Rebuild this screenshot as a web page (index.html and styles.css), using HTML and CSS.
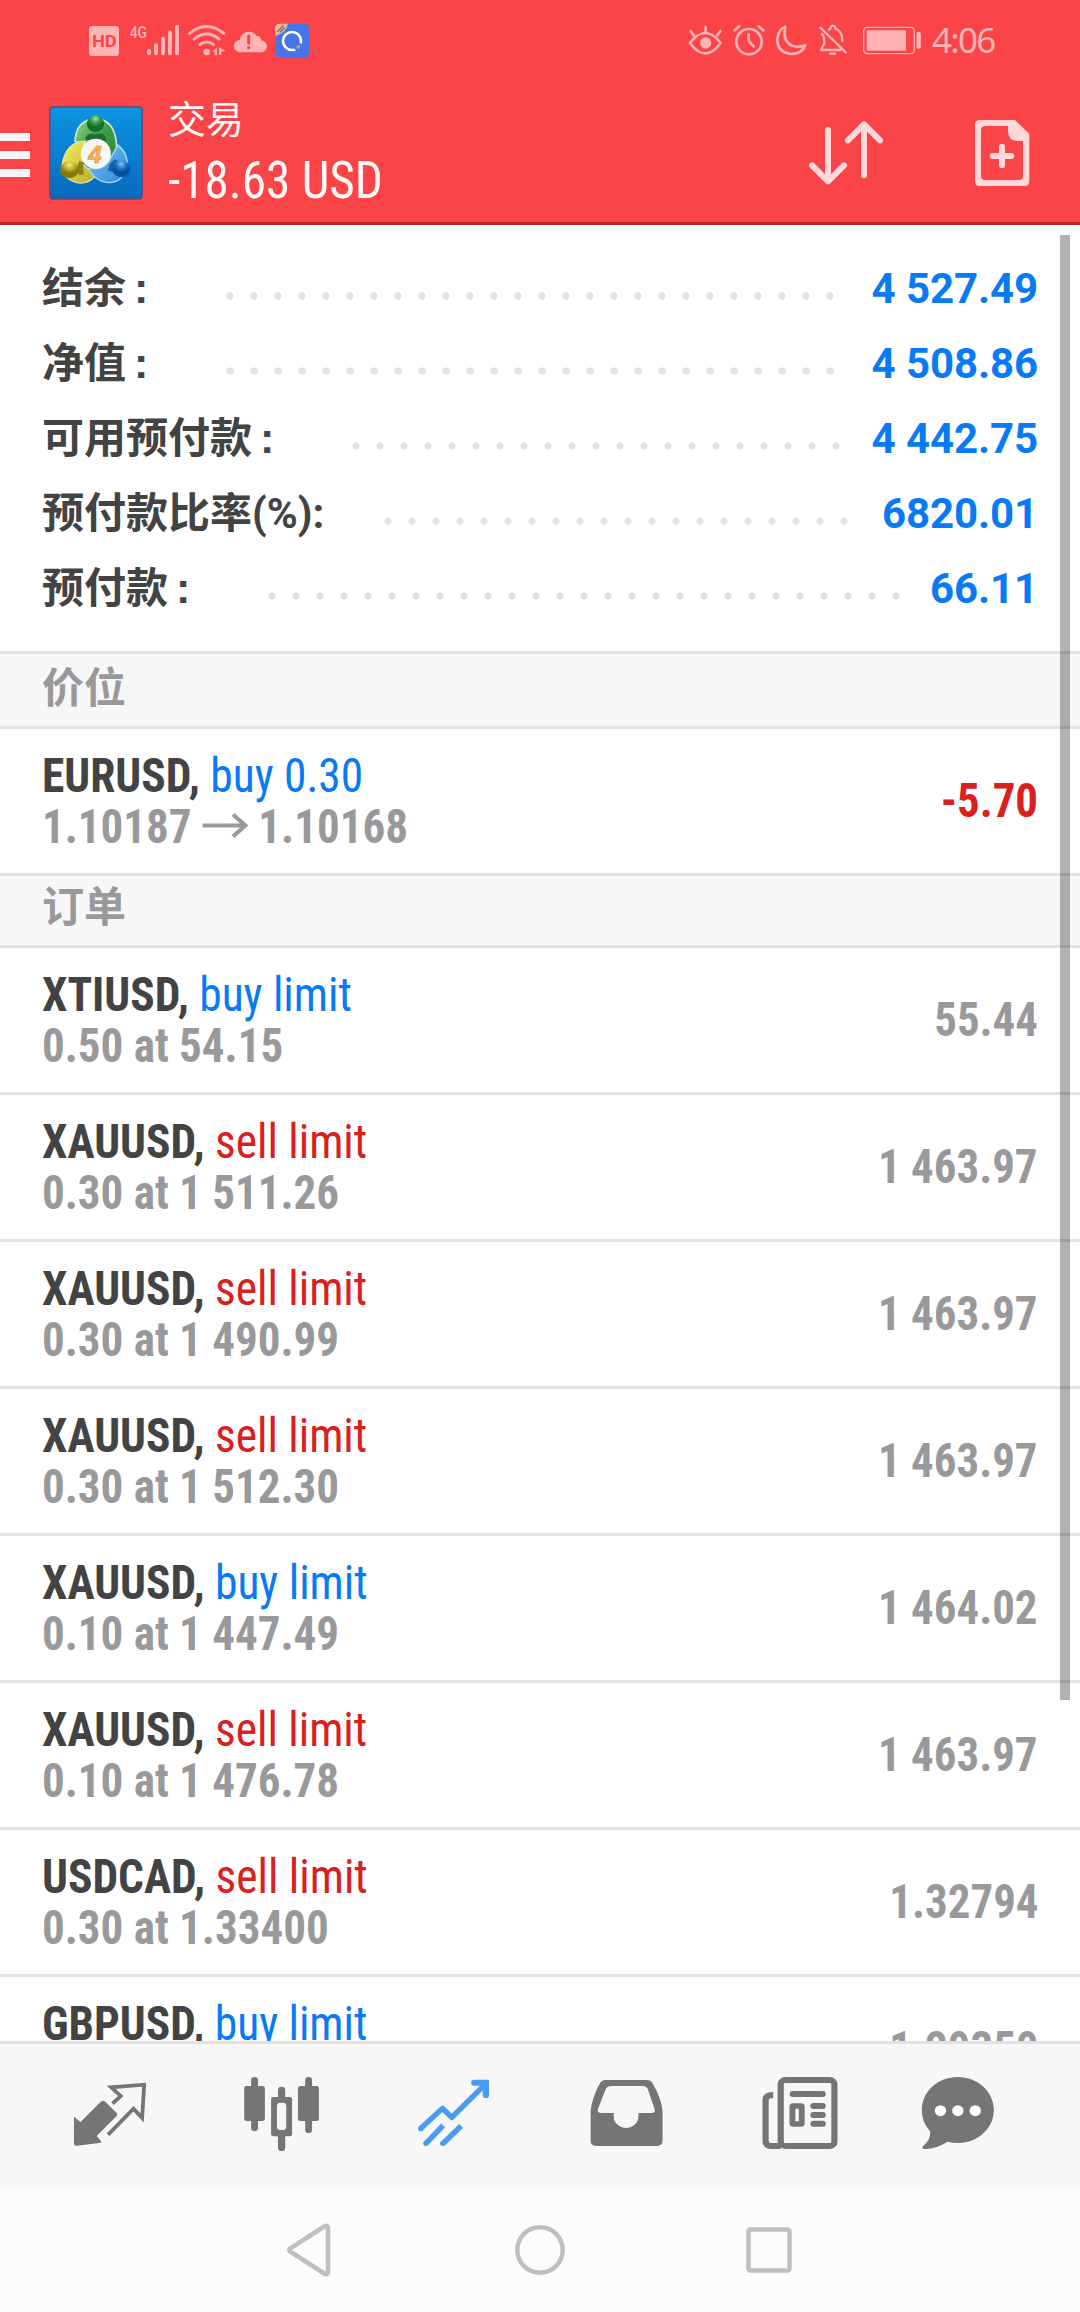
FILE: index.html
```html
<!DOCTYPE html>
<html lang="zh-CN">
<head>
<meta charset="utf-8">
<title>交易</title>
<link rel="stylesheet" href="styles.css">
</head>
<body>
<div class="screen">
  <header class="top">
    <div class="status">
      <svg class="status-left" width="230" height="40" viewBox="240 60 690 120" fill="#ffb3b5">
        <path fill-rule="evenodd" d="M277 78h70q10 0 10 10v70q0 10-10 10h-70q-10 0-10-10V88q0-10 10-10z"/>
        <text x="276" y="142" class="hd" textLength="74" lengthAdjust="spacingAndGlyphs">HD</text>
        <text x="389" y="115" class="net" textLength="52" lengthAdjust="spacingAndGlyphs">4G</text>
        <g stroke="#ffb3b5" stroke-width="12" stroke-linecap="round">
          <path d="M447 153v7M468 136v24M489 116v44M510 97v63M531 80v80"/>
        </g>
        <g stroke="#ffb3b5" stroke-width="9" fill="none" stroke-linecap="round">
          <path d="M569 100q51-41 102 0M583 117q37-30 74 0M600 134q20-16 41 0"/>
        </g>
        <circle cx="620" cy="156" r="10"/>
        <path d="M638 154l13-12v24h-7v-9zM657 142l20 11-13 2v9h-7z"/>
        <path d="M721 157a19 19 0 0 1-1-38 27 27 0 0 1 49-12q13 0 15 14a18 18 0 0 1-3 36z"/>
        <path d="M746 108v21" stroke="#fb4447" stroke-width="9" stroke-linecap="round"/><circle cx="746" cy="143" r="5" fill="#fb4447"/>
        <rect x="825" y="71" width="103" height="103" rx="16" fill="#4575e9"/>
        <path d="M825 108V87q0-16 16-16h23q-5 28-39 37z" fill="#e7b98e"/>
        <path d="M832 95l18-18M840 97l14-14" stroke="#806b73" stroke-width="4"/>
        <circle cx="876" cy="123" r="27" fill="none" stroke="#fff" stroke-width="8"/>
        <circle cx="895" cy="141" r="13" fill="#4575e9"/><circle cx="895" cy="141" r="6" fill="#c2a055"/>
      </svg>
      <div class="status-right">
        <svg width="240" height="40" viewBox="75 60 720 120" fill="none" stroke="#ffb3b5" stroke-width="8" stroke-linecap="round" stroke-linejoin="round">
          <path d="M90 129q46-60 92 0-46 63-92 0zM137 81v14M92 93l9 13M181 93l-9 13"/>
          <circle cx="137" cy="129" r="17" fill="#ffb3b5" stroke="none"/>
          <circle cx="267" cy="125" r="38"/><path d="M266 103v20l15 16M224 91l14-12M310 91l-14-12"/>
          <path d="M376 80q-9 43 20 57 17 8 40-1-10 26-42 26-42-4-42-44 2-30 24-38z"/>
          <path d="M481 83l76 74M486 102q8 8 7 28l-10 20h58M507 89l5-4q-1-8 6-8 7 0 8 8 22 9 21 38M511 161h14" stroke-width="7"/>
          <rect x="611" y="82" width="152" height="79" rx="11" stroke-width="4"/>
          <rect x="620" y="91" width="118" height="61" rx="3" fill="#ffb3b5" stroke="none"/>
          <path d="M776 102v38" stroke-width="13"/>
        </svg>
        <span class="clock">4:06</span>
      </div>
    </div>
    <div class="bar">
      <div class="burger"><i></i><i></i><i></i></div>
      <svg class="logo" width="94" height="94" viewBox="148 319 281 281">
        <defs>
          <linearGradient id="sky" x1="0" y1="0" x2="0" y2="1"><stop offset="0" stop-color="#0d95e2"/><stop offset="1" stop-color="#0569bd"/></linearGradient>
          <linearGradient id="green" x1="0" y1="0" x2="1" y2="1"><stop offset="0" stop-color="#8fd884"/><stop offset=".5" stop-color="#3d9a4a"/><stop offset="1" stop-color="#2b8a3c"/></linearGradient>
          <linearGradient id="yellow" x1="0" y1="0" x2="1" y2="1"><stop offset="0" stop-color="#f8ef5c"/><stop offset="1" stop-color="#b9ac2c"/></linearGradient>
          <linearGradient id="blue" x1="0" y1="0" x2="1" y2="1"><stop offset="0" stop-color="#7cc4f4"/><stop offset="1" stop-color="#2c88d6"/></linearGradient>
          <radialGradient id="gball" cx=".5" cy=".2"><stop offset="0" stop-color="#a9e3a2"/><stop offset=".5" stop-color="#3ba04c"/><stop offset="1" stop-color="#107029"/></radialGradient>
          <radialGradient id="yball" cx=".5" cy=".2"><stop offset="0" stop-color="#f3eb8c"/><stop offset=".5" stop-color="#c9b92a"/><stop offset="1" stop-color="#83790e"/></radialGradient>
          <radialGradient id="bball" cx=".5" cy=".2"><stop offset="0" stop-color="#8accf8"/><stop offset=".5" stop-color="#1f7fcb"/><stop offset="1" stop-color="#07509b"/></radialGradient>
        </defs>
        <rect x="150.500" y="322" width="276" height="275" rx="9" fill="url(#sky)" stroke="#5c4a78" stroke-width="4"/>
        <path d="M226 425q2-48 34-62 27-14 54 0 38 20 36 92-8 42-32 48l-48-68z" fill="url(#green)" stroke="#cdeac4" stroke-width="5"/>
        <path d="M256 420q2-14 12-18h38q12 4 14 24z" fill="#1d6f33"/>
        <path d="M256 424q-52 2-66 58-10 38 18 56 36 22 66 2 8-5 12-14l-40-36z" fill="url(#yellow)" stroke="#e9e6a0" stroke-width="4"/>
        <path d="M240 482q-14 20-2 44l14-2-2-34z" fill="#8b8118"/>
        <path d="M354 436q34 28 26 68-12 42-50 44-42 0-64-42l60-20z" fill="url(#blue)" stroke="#a9d9f8" stroke-width="4"/>
        <path d="M330 492l14-14 10 4-16 34-14-4z" fill="#1762a8"/>
        <ellipse cx="287" cy="372" rx="26" ry="25" fill="url(#gball)"/>
        <ellipse cx="209" cy="510" rx="28" ry="25" fill="url(#yball)"/>
        <ellipse cx="364" cy="507" rx="27" ry="25" fill="url(#bball)"/>
        <circle cx="288" cy="462" r="45" fill="#f7f7f4"/>
        <text x="265" y="488" class="four" textLength="40" lengthAdjust="spacingAndGlyphs">4</text>
      </svg>
      <div class="titles"><div class="title">交易</div><div class="profit">-18.63 USD</div></div>
      <svg class="act" width="74" height="64" viewBox="447 362 222 192" fill="none" stroke="#ffd9da" stroke-width="18" stroke-linecap="round" stroke-linejoin="round">
        <path d="M504 389v154M456 495l48 48 48-48M612 525V372M564 420l48-48 48 48"/>
      </svg>
      <svg class="act doc" width="56" height="68" viewBox="942 357 168 204" fill="#ffd9da">
        <path fill-rule="evenodd" d="M959 360h106l43 42v142q0 14-14 14H959q-14 0-14-14V374q0-14 14-14zM976 378q-13 0-13 13v136q0 13 13 13h100q13 0 13-13V423h-16q-29 0-29-29v-16z"/>
        <path d="M998 468h56M1026 440v56" stroke="#ffd9da" stroke-width="18" stroke-linecap="round"/>
      </svg>
    </div>
  </header>

  <main class="list">
    <div class="summary">
      <div class="sum"><span>结余<s>:</s></span><i></i><b>4 527.49</b></div>
      <div class="sum"><span>净值<s>:</s></span><i></i><b>4 508.86</b></div>
      <div class="sum"><span>可用预付款<s>:</s></span><i></i><b>4 442.75</b></div>
      <div class="sum ratio"><span>预付款比率(%):</span><i></i><b>6820.01</b></div>
      <div class="sum"><span>预付款<s>:</s></span><i></i><b>66.11</b></div>
    </div>
    <h2 class="section first">价位</h2>
    <div class="row"><div><div class="sym">EURUSD, <em class="buy">buy 0.30</em></div><div class="sub">1.10187 <svg class="arrow" width="49" height="25" viewBox="0 0 45 25" preserveAspectRatio="none" fill="none" stroke="#99999b" stroke-width="4"><path d="M0 12.500h43M30 1.500l12 11-12 11"/></svg> 1.10168</div></div><div class="val loss">-5.70</div></div>
    <h2 class="section">订单</h2>
    <div class="row"><div><div class="sym">XTIUSD, <em class="buy">buy limit</em></div><div class="sub">0.50 at 54.15</div></div><div class="val">55.44</div></div>
    <div class="row"><div><div class="sym">XAUUSD, <em class="sell">sell limit</em></div><div class="sub">0.30 at 1 511.26</div></div><div class="val">1 463.97</div></div>
    <div class="row"><div><div class="sym">XAUUSD, <em class="sell">sell limit</em></div><div class="sub">0.30 at 1 490.99</div></div><div class="val">1 463.97</div></div>
    <div class="row"><div><div class="sym">XAUUSD, <em class="sell">sell limit</em></div><div class="sub">0.30 at 1 512.30</div></div><div class="val">1 463.97</div></div>
    <div class="row"><div><div class="sym">XAUUSD, <em class="buy">buy limit</em></div><div class="sub">0.10 at 1 447.49</div></div><div class="val">1 464.02</div></div>
    <div class="row"><div><div class="sym">XAUUSD, <em class="sell">sell limit</em></div><div class="sub">0.10 at 1 476.78</div></div><div class="val">1 463.97</div></div>
    <div class="row"><div><div class="sym">USDCAD, <em class="sell">sell limit</em></div><div class="sub">0.30 at 1.33400</div></div><div class="val">1.32794</div></div>
    <div class="row"><div><div class="sym">GBPUSD, <em class="buy">buy limit</em></div></div><div class="val">1.29350</div></div>
    <div class="scrollbar"></div>
  </main>

  <nav class="tabs">
    <svg viewBox="189 147 261.400 270" preserveAspectRatio="none" fill="#757575">
      <path d="M215 290l19 16 59-61q7-5 13 0l33 34q3 5 0 9l-58 60 13 16-1 4-69 9q-9 1-9-9z"/>
      <path d="M327 251l24-23-28-26 96-8-6 100-25-28-74 78" fill="none" stroke="#757575" stroke-width="11"/>
    </svg>
    <svg viewBox="688 147 261.400 270" preserveAspectRatio="none" fill="#757575">
      <rect x="709" y="198" width="60" height="105" rx="7"/><rect x="865" y="198" width="61" height="105" rx="7"/>
      <rect x="729" y="171" width="20" height="162" rx="10"/><rect x="886" y="171" width="20" height="168" rx="10"/><rect x="807" y="200" width="21" height="193" rx="10"/>
      <rect x="787" y="231" width="61" height="118" rx="7"/><rect x="804" y="248" width="27" height="82" rx="10" fill="#f7f7f7"/>
    </svg>
    <svg viewBox="1187.700 147 261.400 270" preserveAspectRatio="none" fill="none" stroke="#4a9bf5" stroke-width="16">
      <path d="M1221 326l64-61 27 27 99-101" stroke-linejoin="round"/><path d="M1377 188h34v38" stroke-width="18" stroke-linecap="round"/>
      <path d="M1287 316l-50 54M1339 318l-53 53"/><g fill="#4a9bf5" stroke="none"><circle cx="1222" cy="326" r="8"/><circle cx="1237" cy="370" r="8"/><circle cx="1286" cy="370" r="8"/></g>
    </svg>
    <svg viewBox="122 147 261.400 270" preserveAspectRatio="none" fill="#757575">
      <path fill-rule="evenodd" d="M190 180h120q11 0 17 10 27 48 29 85v86q0 17-16 17H163q-16 0-16-17v-86q2-37 27-85 6-10 16-10zM207 198q-12 0-16 9l-23 61q-2 11 10 11h36v10a36 35 0 0 0 72 0v-10h38q12 0 9-11l-20-61q-4-9-16-9z"/>
    </svg>
    <svg viewBox="624.300 147 261.400 270" preserveAspectRatio="none" fill="none" stroke="#757575" stroke-width="18">
      <rect x="699" y="180" width="156" height="198" rx="13"/><path d="M699 378h-28q-16 0-16-16V240q0-15 22-15"/>
      <path d="M734 222h87M794 258h27M794 285h27M794 311h27" stroke-linecap="round"/><rect x="733" y="258" width="27" height="54" rx="2" stroke-width="17"/>
    </svg>
    <svg viewBox="1083.200 147 261.400 270" preserveAspectRatio="none" fill="#757575">
      <path d="M1213 171c58 0 105 44 105 99s-47 100-105 99q-17 0-29-4-42 26-71 21-6-1-1-7 24-20 21-45c-17-20-24-40-24-64 0-55 46-99 104-99z"/>
      <g fill="#fff"><circle cx="1163" cy="272" r="16.500"/><circle cx="1213.500" cy="272" r="16.500"/><circle cx="1264" cy="272" r="16.500"/></g>
    </svg>
  </nav>

  <footer class="system">
    <svg width="56" height="56" viewBox="0 0 56 56"><path d="M45 6v44a2 2 0 0 1-3 2L7 29.500a2 2 0 0 1 0-3L42 4a2 2 0 0 1 3 2z"/></svg>
    <svg width="56" height="56" viewBox="0 0 56 56"><circle cx="28" cy="28" r="22.700"/></svg>
    <svg width="56" height="56" viewBox="0 0 56 56"><rect x="7.500" y="7.500" width="41" height="41" rx="2"/></svg>
  </footer>
</div>
</body>
</html>
```

FILE: styles.css
```css
* { box-sizing: border-box; }
body { margin: 0; background: #fff; font-family: Roboto, "Noto Sans CJK SC", sans-serif; }
svg { display: block; flex: none; }
.screen { width: 1080px; height: 2312px; overflow: hidden; display: flex; flex-direction: column; }

.top { height: 225px; flex: none; background: #fb4447; border-bottom: 3px solid #b9262b; display: flex; flex-direction: column; }
.status { height: 80px; display: flex; justify-content: space-between; padding: 20px 85px 0 80px; }
.status-right { display: flex; }
.clock { width: 63px; margin-left: 7px; color: #ffb3b5; font: 35px/40px "Noto Sans", sans-serif; letter-spacing: -1.700px; white-space: nowrap; }
.hd { font: bold 49px Roboto, sans-serif; fill: #fb4447; }
.net { font: 500 52px Roboto, sans-serif; }
.bar { flex: 1; display: flex; align-items: flex-start; padding-right: 50px; }
.burger { display: flex; flex-direction: column; gap: 10px; width: 30px; margin-top: 53px; }
.burger i { height: 8px; background: #f6f5fa; }
.logo { margin: 26px 0 0 19px; }
.four { font: bold italic 72px "Liberation Sans", sans-serif; fill: #f6b65a; stroke: #e58a1c; stroke-width: 2; }
.titles { flex: 1; padding-left: 25px; color: #fff8f6; margin-top: 13px; }
.title { font-size: 38px; line-height: 54px; font-weight: 400; }
.profit { font-size: 51px; line-height: 68px; font-family: "Roboto Condensed", Roboto, sans-serif; font-stretch: 75%; font-weight: 450; white-space: nowrap; transform: scaleX(.965); transform-origin: left; }
.act { margin-top: 41px; }
.doc { margin: 39px 0 0 91px; }

.list { flex: none; height: 1816px; overflow: hidden; position: relative; }
.summary { height: 426px; padding: 26px 42px 0; }
.sum { height: 75px; display: flex; align-items: center; font-size: 42px; line-height: 75px; color: #434343; }
.sum span { font-weight: 700; font-family: Roboto, "Noto Sans CJK SC", sans-serif; }
.sum s { display: inline-block; width: 42px; padding-left: 8px; font-family: "Liberation Sans", sans-serif; font-size: 43px; text-decoration: none; line-height: 1; }
.sum i { flex: 1; height: 8px; margin: 14px 27px 0 50px; background: radial-gradient(circle, #e2e2e2 3.200px, transparent 4px) 0 0 / 24px 8px; }
.ratio i { margin-left: 52px; }
.sum b { font-weight: 700; letter-spacing: -.1px; color: #087af5; }
.section { margin: 0; height: 72px; padding-left: 42px; background: #f7f7f7; border-bottom: 3px solid #e2e2e2; color: #99999b; font-size: 42px; line-height: 64px; font-weight: 700; }
.first { height: 78px; border-top: 3px solid #e2e2e2; line-height: 69px; }
.row { height: 147px; border-bottom: 3px solid #e2e2e2; padding: 21px 42px 0; display: flex; justify-content: space-between; font-family: "Roboto Condensed", Roboto, "Noto Sans CJK SC", sans-serif; font-stretch: 75%; font-size: 48px; line-height: 51px; font-weight: 700; color: #99999b; white-space: nowrap; }
.sym, .sub { transform: scaleX(.938); transform-origin: left; }
.sym { color: #434343; transform: scaleX(.946); }
.sym em { font-style: normal; font-weight: 400; }
.buy { color: #087af5; }
.sell { color: #d8201f; }
.val { margin-top: 25px; transform: scaleX(.935); transform-origin: right; }
.loss { color: #d8201f; }
.arrow { display: inline-block; position: relative; top: -5px; }
.scrollbar { position: absolute; left: 1060px; top: 10px; width: 10px; height: 1465px; background: rgba(0, 0, 0, .3); }

.tabs { height: 146px; flex: none; background: #f7f7f7; border-top: 3px solid #e2e2e2; display: grid; grid-template-columns: 172px 172px 172px 173px 173px 143px; padding: 0 0 3px 24px; place-items: center; }
.tabs svg { width: 90px; height: 90px; }
.system { flex: 1; background: #fcfcfc; display: flex; justify-content: center; align-items: center; gap: 173px; }
.system svg { fill: none; stroke: #bfbfbf; stroke-width: 4.500; }
```
